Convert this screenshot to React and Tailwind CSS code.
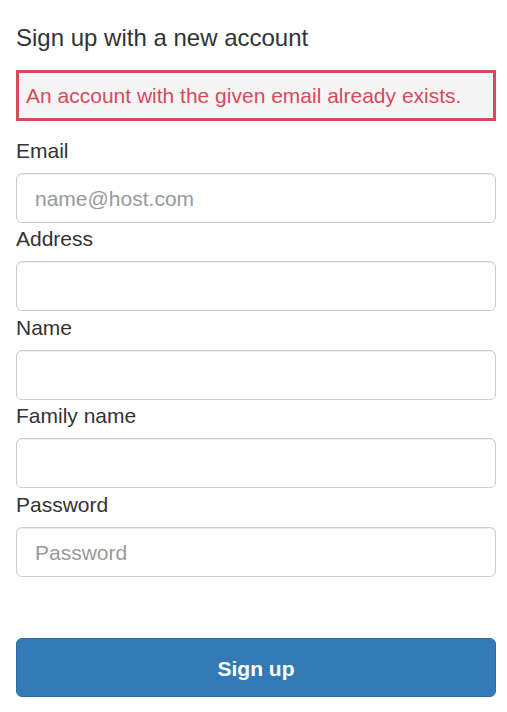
import React from 'react'

const fields = [
  { label: 'Email', type: 'email', placeholder: 'name@host.com' },
  { label: 'Address', type: 'text', placeholder: '' },
  { label: 'Name', type: 'text', placeholder: '' },
  { label: 'Family name', type: 'text', placeholder: '' },
  { label: 'Password', type: 'password', placeholder: 'Password' },
]

function Field({ label, type, placeholder }) {
  return (
    <div>
      <label className="block text-[21px] leading-[30px] pt-[1.5px] mb-[7px] text-[#333]">{label}</label>
      <input
        type={type}
        placeholder={placeholder}
        className="block w-full h-[50px] px-[18px] pt-[3px] text-[21px] text-[#555] bg-white border border-[#ccc] rounded-[6px] shadow-[inset_0_1px_1px_rgba(0,0,0,0.075)] placeholder:text-[#999] outline-none"
      />
    </div>
  )
}

export default function App() {
  return (
    <div className="pl-4 pr-[11px] pt-[25px] bg-white min-h-[712px]" style={{ fontFamily: '"Liberation Sans", Arial, sans-serif' }}>
      <h1 className="text-[24px] leading-[26px] text-[#333]">Sign up with a new account</h1>
      <div className="mt-[19px] border-[3px] border-[#d64b5c] bg-[#f5f5f5] pl-[7px] py-[7.5px] text-[21px] leading-[30px] text-[#d64b5c]">
        An account with the given email already exists.
      </div>
      <form className="mt-[13px]" onSubmit={(e) => e.preventDefault()}>
        {fields.map((f) => (
          <Field key={f.label} {...f} />
        ))}
        <button
          type="submit"
          className="block w-full mt-[61px] h-[59px] pt-[3px] bg-[#337ab7] border border-[#2e6da4] rounded-[6px] text-white text-[21px] font-bold"
        >
          Sign up
        </button>
      </form>
    </div>
  )
}
